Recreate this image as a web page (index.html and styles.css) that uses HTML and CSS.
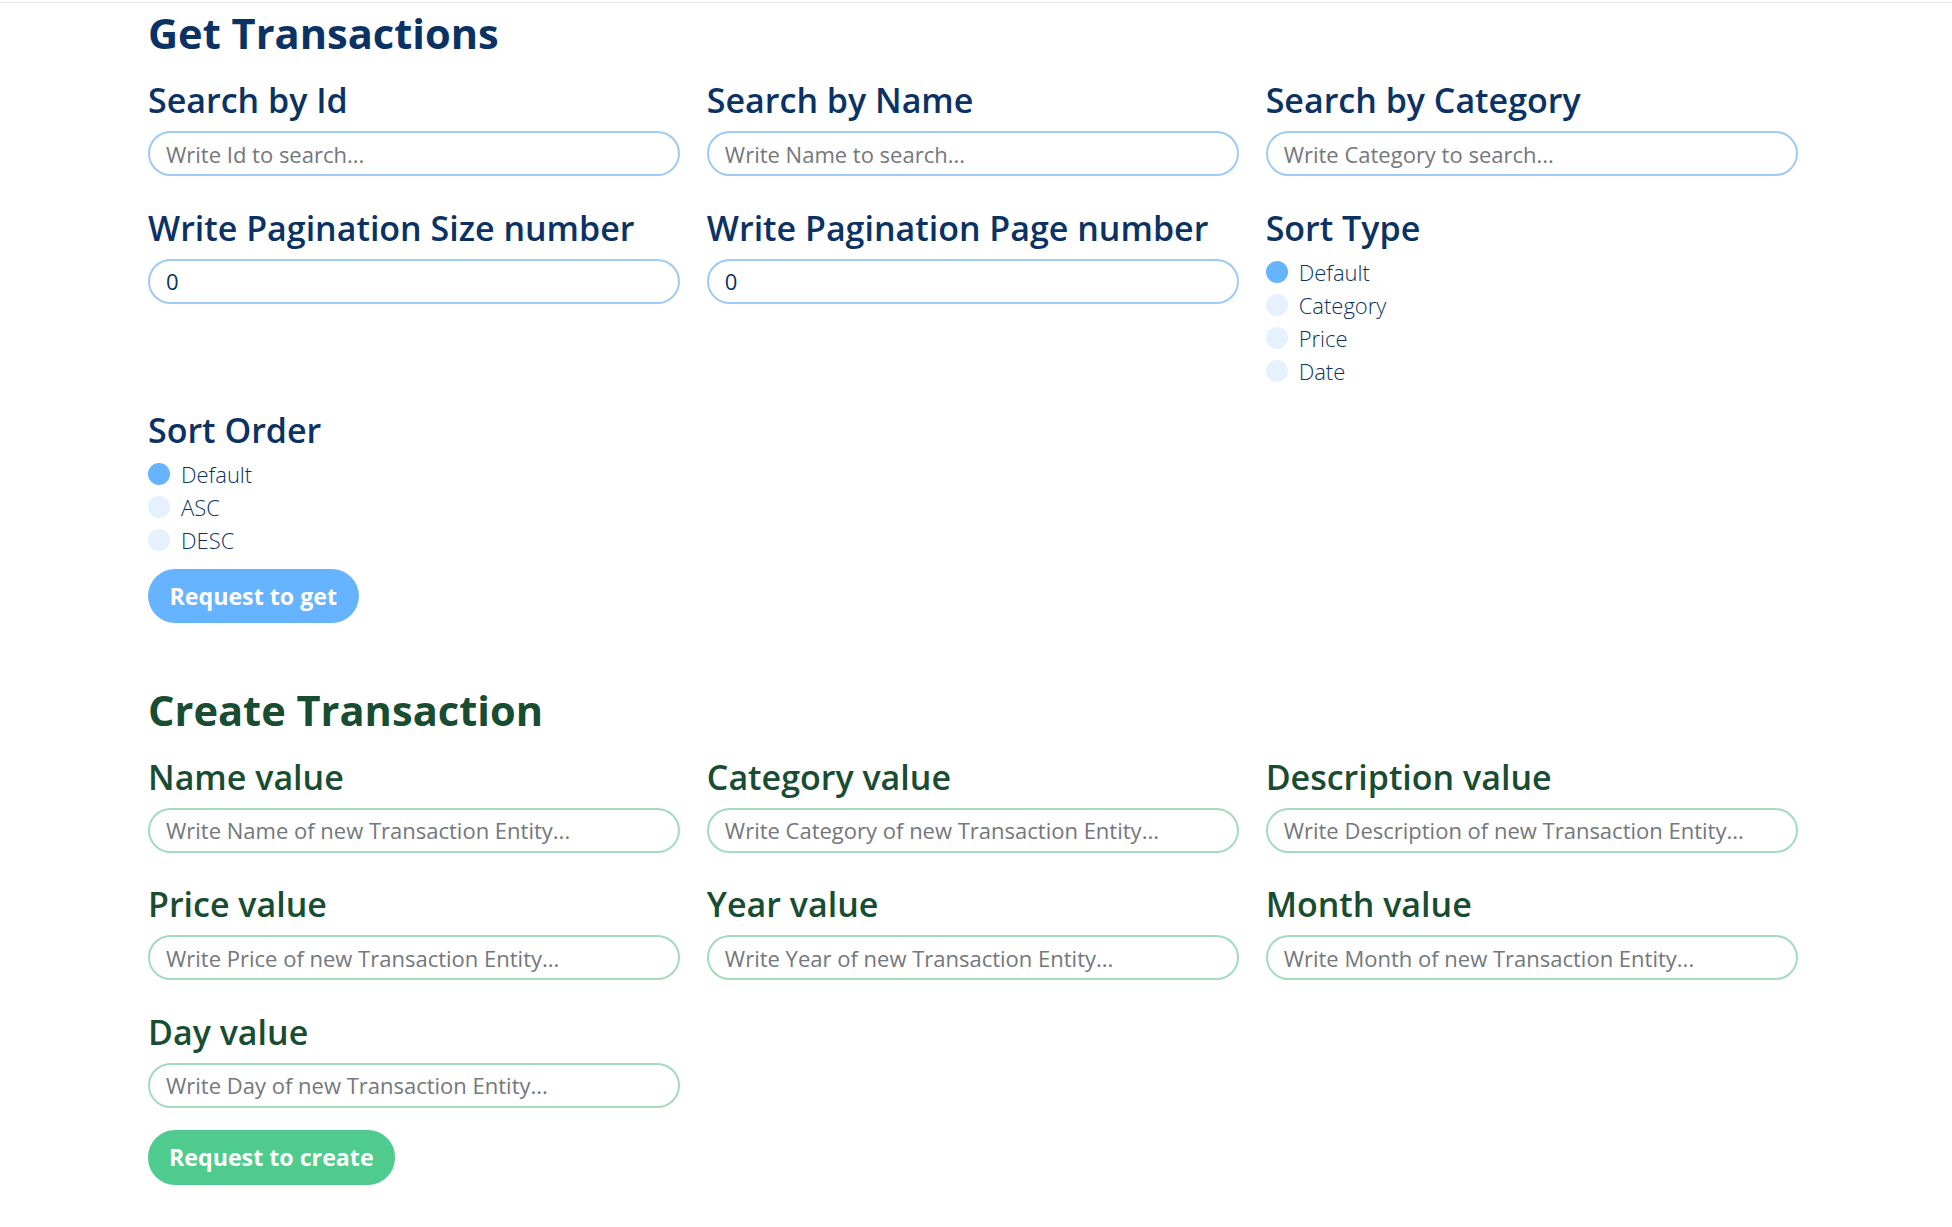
FILE: index.html
```html
<!DOCTYPE html>
<html lang="en">
<head>
<meta charset="utf-8">
<title>Transactions</title>
<link rel="stylesheet" href="styles.css">
</head>
<body>
<div class="topline"></div>
<main class="page">
  <section class="panel panel-get">
    <h1 class="panel-title">Get Transactions</h1>
    <div class="grid">
      <div class="field">
        <label class="field-label" for="s-id">Search by Id</label>
        <input class="field-input" id="s-id" type="text" placeholder="Write Id to search...">
      </div>
      <div class="field">
        <label class="field-label" for="s-name">Search by Name</label>
        <input class="field-input" id="s-name" type="text" placeholder="Write Name to search...">
      </div>
      <div class="field">
        <label class="field-label" for="s-cat">Search by Category</label>
        <input class="field-input" id="s-cat" type="text" placeholder="Write Category to search...">
      </div>
      <div class="field">
        <label class="field-label" for="p-size">Write Pagination Size number</label>
        <input class="field-input" id="p-size" type="number" value="0">
      </div>
      <div class="field">
        <label class="field-label" for="p-page">Write Pagination Page number</label>
        <input class="field-input" id="p-page" type="number" value="0">
      </div>
      <div class="field">
        <span class="field-label">Sort Type</span>
        <div class="radios">
          <label class="radio"><input type="radio" name="stype" checked><span>Default</span></label>
          <label class="radio"><input type="radio" name="stype"><span>Category</span></label>
          <label class="radio"><input type="radio" name="stype"><span>Price</span></label>
          <label class="radio"><input type="radio" name="stype"><span>Date</span></label>
        </div>
      </div>
      <div class="field">
        <span class="field-label">Sort Order</span>
        <div class="radios">
          <label class="radio"><input type="radio" name="sorder" checked><span>Default</span></label>
          <label class="radio"><input type="radio" name="sorder"><span>ASC</span></label>
          <label class="radio"><input type="radio" name="sorder"><span>DESC</span></label>
        </div>
      </div>
    </div>
    <button class="btn" type="button">Request to get</button>
  </section>

  <section class="panel panel-create">
    <h1 class="panel-title">Create Transaction</h1>
    <div class="grid">
      <div class="field">
        <label class="field-label" for="c-name">Name value</label>
        <input class="field-input" id="c-name" type="text" placeholder="Write Name of new Transaction Entity...">
      </div>
      <div class="field">
        <label class="field-label" for="c-cat">Category value</label>
        <input class="field-input" id="c-cat" type="text" placeholder="Write Category of new Transaction Entity...">
      </div>
      <div class="field">
        <label class="field-label" for="c-desc">Description value</label>
        <input class="field-input" id="c-desc" type="text" placeholder="Write Description of new Transaction Entity...">
      </div>
      <div class="field">
        <label class="field-label" for="c-price">Price value</label>
        <input class="field-input" id="c-price" type="text" placeholder="Write Price of new Transaction Entity...">
      </div>
      <div class="field">
        <label class="field-label" for="c-year">Year value</label>
        <input class="field-input" id="c-year" type="text" placeholder="Write Year of new Transaction Entity...">
      </div>
      <div class="field">
        <label class="field-label" for="c-month">Month value</label>
        <input class="field-input" id="c-month" type="text" placeholder="Write Month of new Transaction Entity...">
      </div>
      <div class="field">
        <label class="field-label" for="c-day">Day value</label>
        <input class="field-input" id="c-day" type="text" placeholder="Write Day of new Transaction Entity...">
      </div>
    </div>
    <button class="btn" type="button">Request to create</button>
  </section>
</main>
</body>
</html>
```

FILE: styles.css
```css
html, body {
  margin: 0;
  padding: 0;
  background: #ffffff;
}

body {
  font-family: "Open Sans", "Noto Sans", sans-serif;
}

.topline {
  height: 2px;
  border-bottom: 1px solid #e1e5ea;
}

.page {
  width: 1650px;
  margin-left: 148px;
  padding-bottom: 40px;
}

.panel-get {
  margin-top: 9px;
  --ink: #0b3264;
  --border: #9fcaf5;
  --accent: #66b3ff;
}

.panel-create {
  margin-top: 66px;
  --ink: #184d32;
  --border: #a3dbbf;
  --accent: #4ecb8d;
}

.panel-title {
  margin: 0 0 30px;
  font-size: 41.6px;
  line-height: 42px;
  font-weight: 700;
  color: var(--ink);
}

.grid {
  display: grid;
  grid-template-columns: repeat(3, 1fr);
  column-gap: 26.5px;
  row-gap: 24px;
  align-items: start;
}

.field {
  display: flex;
  flex-direction: column;
}

.field-label {
  display: block;
  margin: 0 0 14px;
  font-size: 34px;
  line-height: 33px;
  font-weight: 600;
  color: var(--ink);
  white-space: nowrap;
}

.field-input {
  box-sizing: border-box;
  width: 100%;
  height: 45px;
  margin: 0 0 11.5px;
  padding: 0 16px;
  border: 2px solid var(--border);
  border-radius: 23px;
  background: #fff;
  font-family: inherit;
  font-size: 22px;
  color: var(--ink);
  outline: none;
  -moz-appearance: textfield;
}

.field-input::-webkit-outer-spin-button,
.field-input::-webkit-inner-spin-button {
  -webkit-appearance: none;
  margin: 0;
}

.field-input::placeholder {
  color: #74777c;
}

.radios {
  display: flex;
  flex-direction: column;
  margin-top: -3.5px;
  margin-bottom: 2.5px;
}

.radio {
  display: flex;
  align-items: center;
  gap: 11px;
  height: 33px;
  font-size: 22px;
  font-weight: 300;
  color: var(--ink);
}

.radio input {
  -webkit-appearance: none;
  appearance: none;
  width: 22px;
  height: 22px;
  margin: 0;
  border: none;
  border-radius: 50%;
  background: #e6f1fe;
  flex: none;
}

.radio input:checked {
  background: #66b3ff;
}

.btn {
  display: block;
  height: 54px;
  margin-top: 10px;
  padding: 0 21.5px;
  border: none;
  border-radius: 27px;
  background: var(--accent);
  color: #ffffff;
  font-family: inherit;
  font-size: 23.2px;
  font-weight: 700;
  cursor: pointer;
}

.panel-create .btn {
  height: 55px;
  margin-top: 10.5px;
  padding: 0 21px;
}
```
